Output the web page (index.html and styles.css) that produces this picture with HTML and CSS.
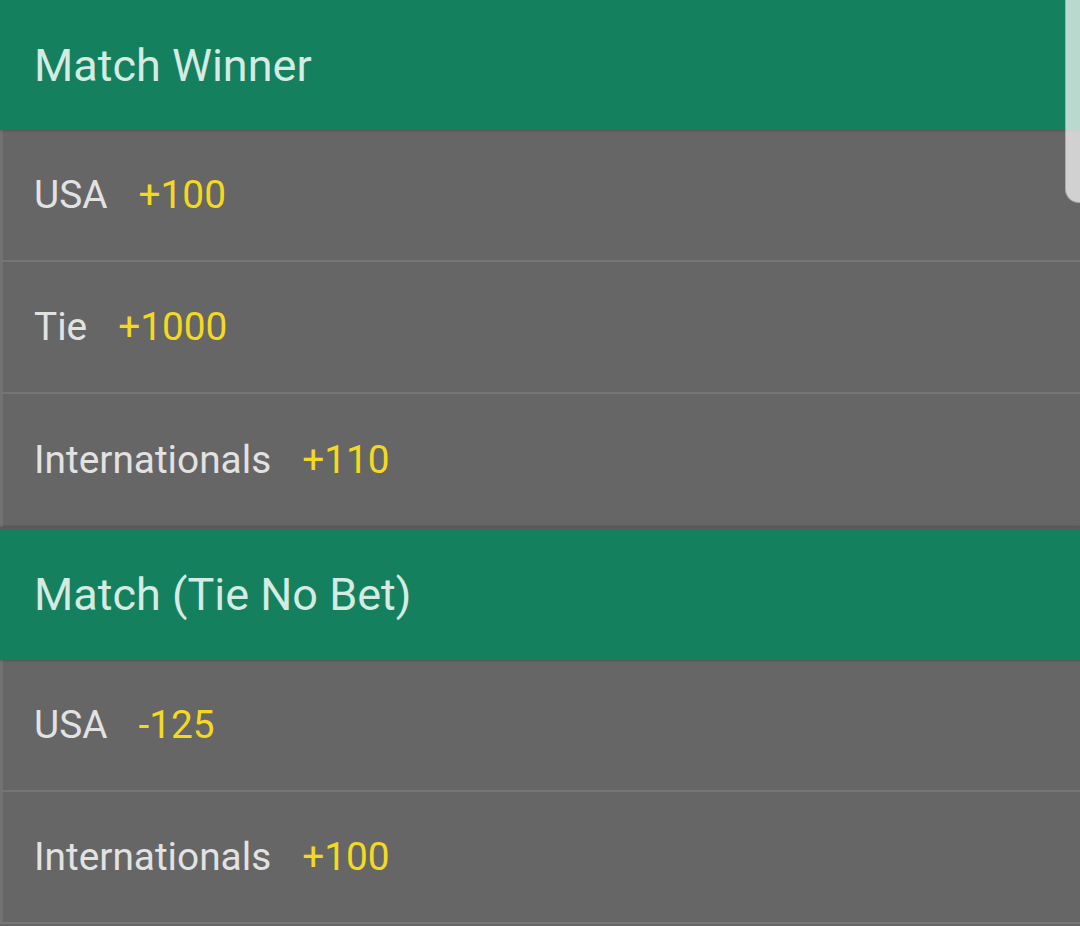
FILE: index.html
```html
<!DOCTYPE html>
<html>
<head>
<meta charset="utf-8">
<link rel="stylesheet" href="styles.css">
</head>
<body>
<div class="page">
  <section class="market">
    <h2 class="market-title">Match Winner</h2>
    <div class="row"><span class="name">USA</span><span class="odds">+100</span></div>
    <div class="row"><span class="name">Tie</span><span class="odds">+1000</span></div>
    <div class="row"><span class="name">Internationals</span><span class="odds">+110</span></div>
  </section>
  <section class="market">
    <h2 class="market-title">Match (Tie No Bet)</h2>
    <div class="row"><span class="name">USA</span><span class="odds">-125</span></div>
    <div class="row"><span class="name">Internationals</span><span class="odds">+100</span></div>
  </section>
  <div class="scroll-thumb"></div>
</div>
</body>
</html>
```

FILE: styles.css
```css
html, body {
  margin: 0;
  padding: 0;
  background: #666666;
}
.page {
  position: relative;
  width: 1080px;
  height: 926px;
  overflow: hidden;
  font-family: Roboto, "Liberation Sans", sans-serif;
}
.market {
  display: flex;
  flex-direction: column;
}
.market-title {
  margin: 0;
  height: 130px;
  display: flex;
  align-items: center;
  padding-left: 34px;
  background: #15805e;
  color: #d3ebe2;
  font-size: 45px;
  font-weight: 400;
  box-shadow: 0 0 3px rgba(0,0,0,0.35);
  position: relative;
  z-index: 1;
}
.market + .market .market-title {
  height: 131px;
  border-top: 2px solid #5a5a5a;
}
.row {
  height: 130px;
  display: flex;
  align-items: center;
  padding-left: 31px;
  padding-bottom: 2px;
  box-sizing: border-box;
  height: 132px;
  border-left: 3px solid #727272;
  border-bottom: 2px solid #767676;
  background: #666666;
  font-size: 38.8px;
}
.market:first-child .row:last-child {
  height: 133px;
  border-bottom: none;
}
.name {
  color: #e2e2e2;
}
.odds {
  color: #f4d923;
  margin-left: 31px;
}
.scroll-thumb {
  position: absolute;
  top: -20px;
  left: 1065px;
  width: 40px;
  height: 221px;
  border-radius: 14px;
  background: rgba(255,255,255,0.7);
  border: 1px solid rgba(0,0,0,0.18);
  z-index: 2;
}
```
